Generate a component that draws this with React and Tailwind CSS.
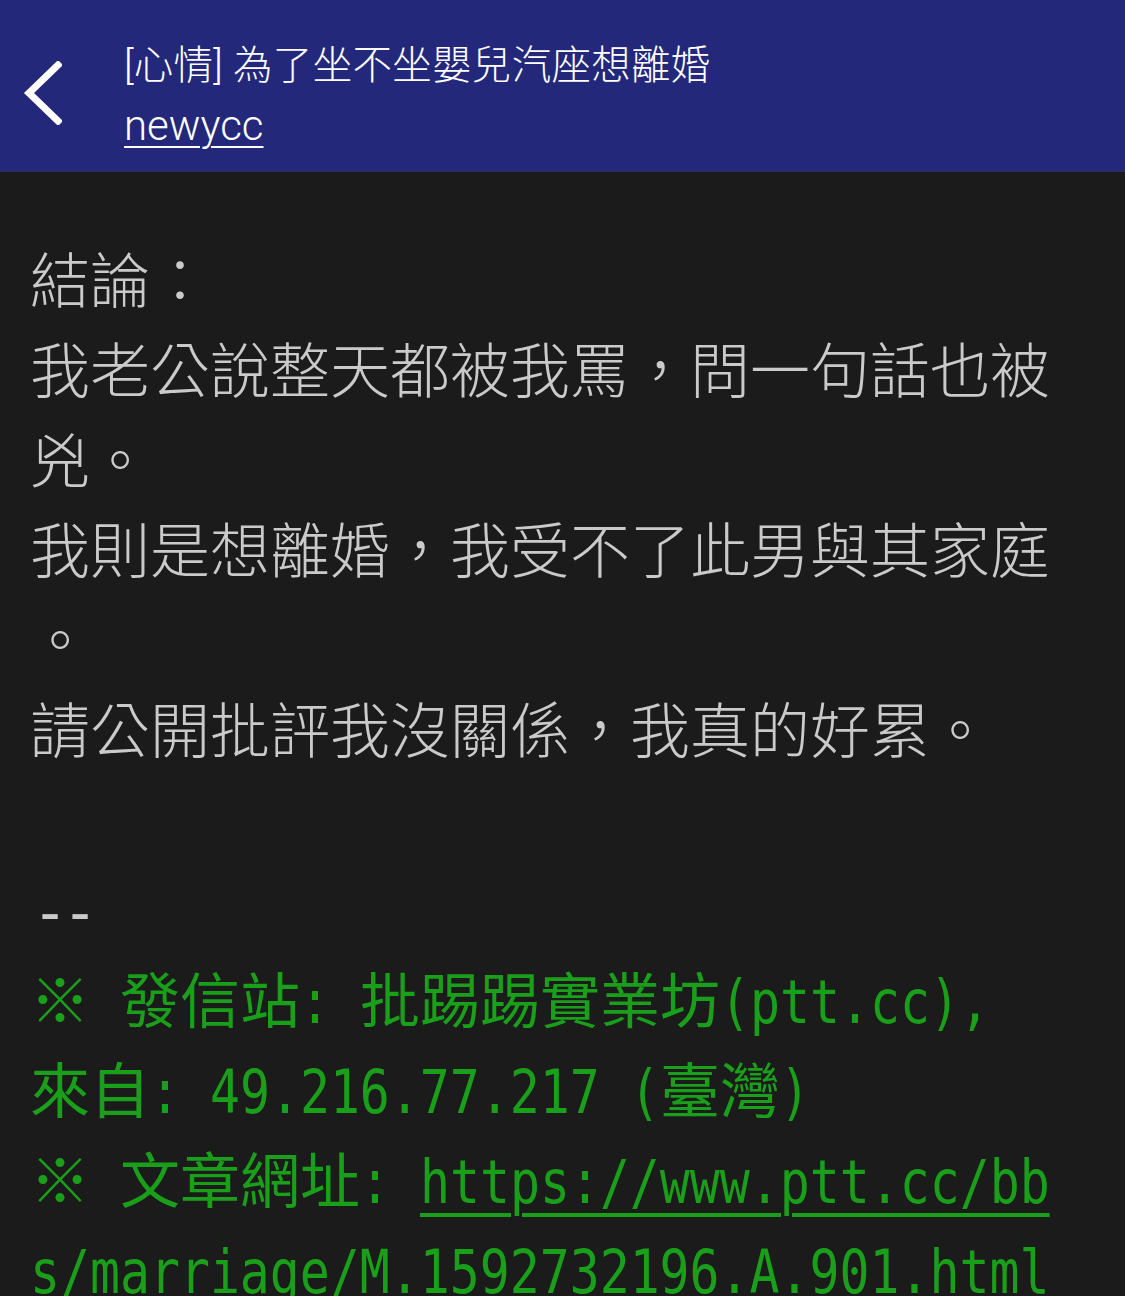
import React from 'react';

const mono = "font-['DejaVu_Sans_Mono','Noto_Sans_CJK_TC',monospace]";

// half-width runs: every ascii char sits in a 30px cell (half of a CJK cell)
const A = ({ t, u }) => (
  <span className="inline-block whitespace-pre" style={{ width: t.length * 30 }}>
    <span
      className={`inline-block origin-left scale-x-[0.83] ${
        u ? 'underline decoration-[4px] underline-offset-[10px]' : ''
      }`}
    >
      {t}
    </span>
  </span>
);

export default function App() {
  return (
    <div className="min-h-[1296px] bg-[#1b1b1b] overflow-hidden">
      {/* Header */}
      <header className="h-[172px] bg-[#24287b] flex items-center border-b border-[#2b2d5a]">
        <button className="w-[124px] h-full flex items-center pl-[22px] pt-[14px]">
          <svg width="40" height="64" viewBox="0 0 40 64" fill="none">
            <path d="M36 4 L7 32 L36 60" stroke="white" strokeWidth="7" strokeLinecap="square" />
          </svg>
        </button>
        <div className="flex flex-col pt-[22px] font-['Roboto','Noto_Sans_CJK_TC',sans-serif] text-white">
          <div className="text-[39.5px] leading-[52px] whitespace-nowrap font-light tracking-[0.3px]">
            [心情] 為了坐不坐嬰兒汽座想離婚
          </div>
          <div className="text-[42px] leading-[56px] mt-[6px] font-light">
            <span className="underline decoration-[2px] underline-offset-[6px]">newycc</span>
          </div>
        </div>
      </header>

      {/* Article body */}
      <main className={`pl-[30px] pt-[65px] text-[60px] leading-[90px] whitespace-nowrap ${mono}`}>
        <div className="text-[#cacaca] font-light">
          <div>結論：</div>
          <div>我老公說整天都被我罵，問一句話也被</div>
          <div>兇。</div>
          <div>我則是想離婚，我受不了此男與其家庭</div>
          <div>。</div>
          <div>請公開批評我沒關係，我真的好累。</div>
          <div>&nbsp;</div>
          <div className="pl-[2px]">
            <span className="tracking-[-6px]">--</span>
          </div>
        </div>
        <div className="text-[#1a9f1a]">
          <div>※<A t=" " />發信站<A t=": " />批踢踢實業坊<A t="(ptt.cc)," /></div>
          <div>來自<A t=": 49.216.77.217 (" />臺灣<A t=")" /></div>
          <div>
            ※<A t=" " />文章網址<A t=": " />
            <A t="https://www.ptt.cc/bb" u />
          </div>
          <div>
            <A t="s/marriage/M.1592732196.A.901.html" u />
          </div>
        </div>
      </main>
    </div>
  );
}
